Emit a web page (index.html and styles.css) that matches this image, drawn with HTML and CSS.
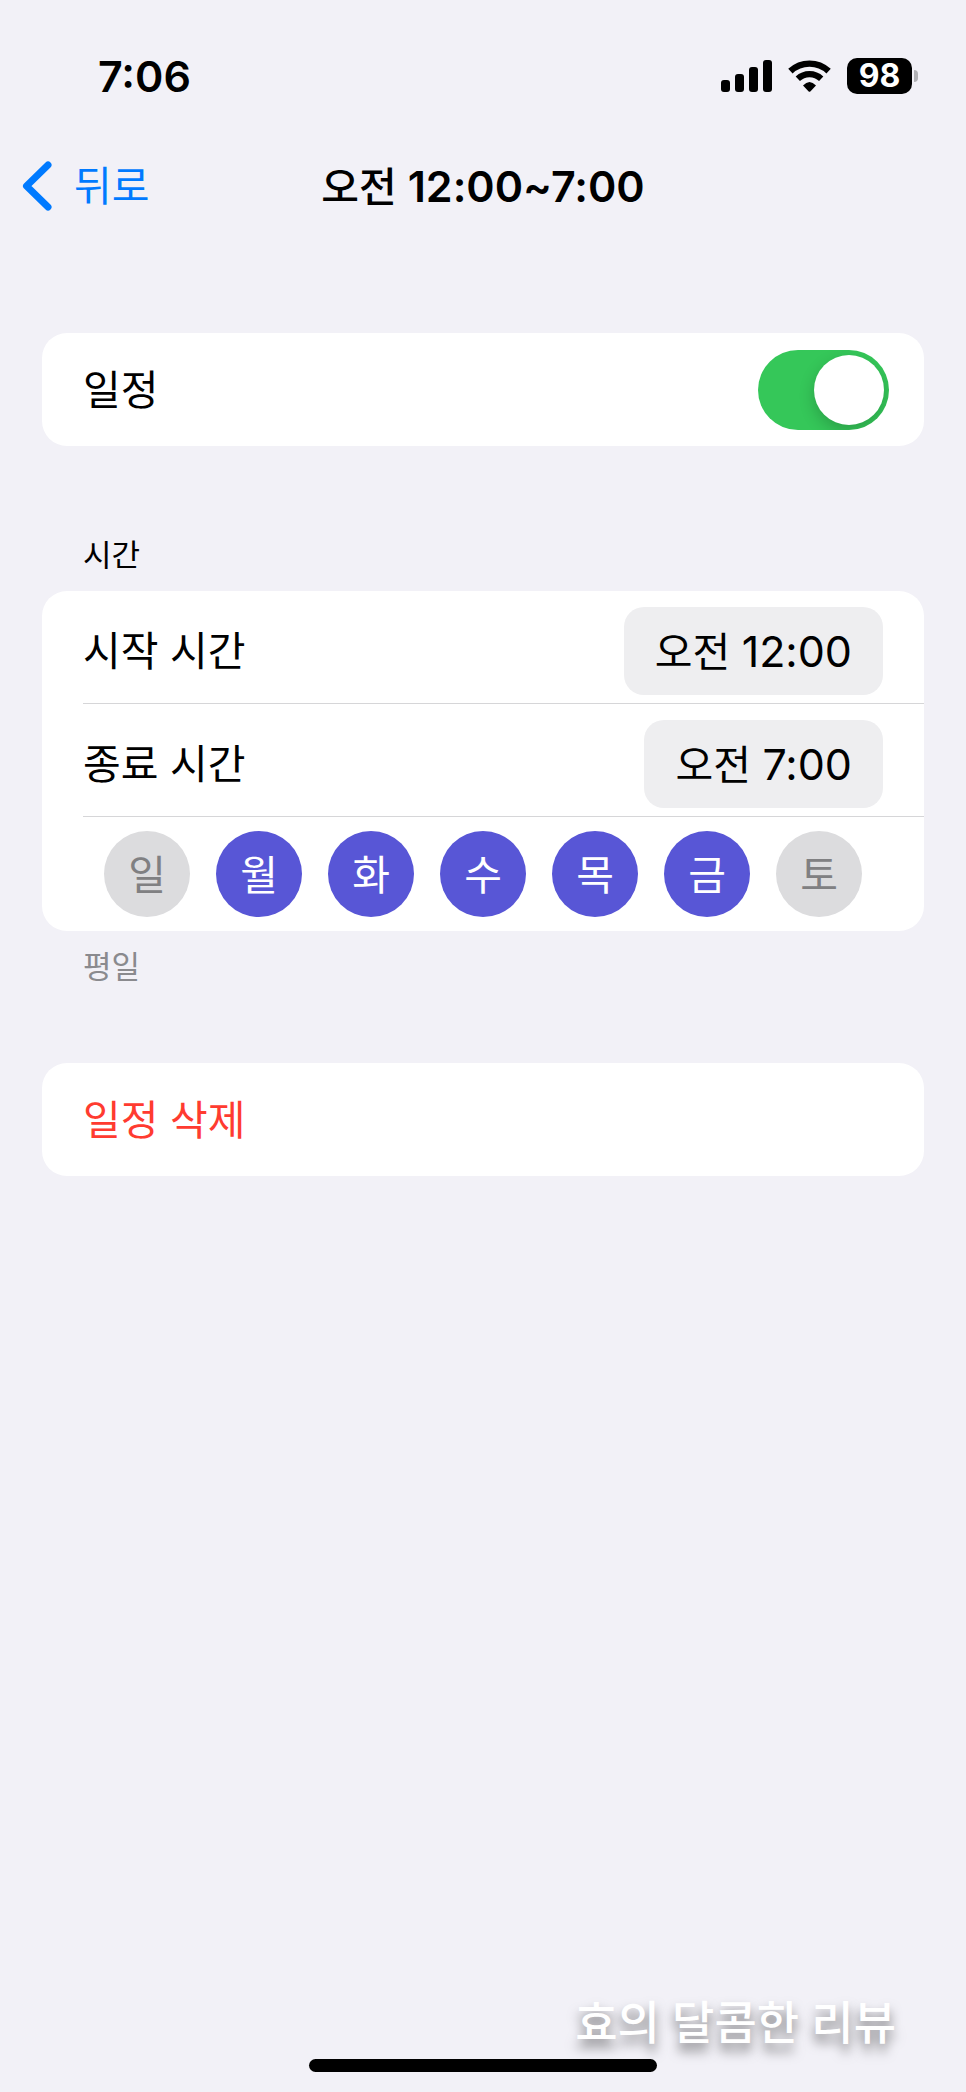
FILE: index.html
```
<!DOCTYPE html>
<html lang="ko">
<head>
  <meta charset="UTF-8">
  <meta name="viewport" content="width=device-width, initial-scale=1">
  <title>오전 12:00~7:00</title>
  <link rel="stylesheet" href="styles.css">
</head>
<body>

  <!-- STATUS BAR -->
  <div class="status-bar">
    <span class="clock">7:06</span>
    <div class="status-icons">
      <svg class="signal" width="51" height="32" viewBox="0 0 51 32">
        <rect x="0" y="20" width="9" height="12" rx="3"/>
        <rect x="14" y="14" width="9" height="18" rx="3"/>
        <rect x="28" y="7" width="9" height="25" rx="3"/>
        <rect x="42" y="0" width="9" height="32" rx="3"/>
      </svg>
      <svg class="wifi" width="43" height="32" viewBox="0 0 43 32">
        <path d="M2.4 11.2A28 28 0 0 1 40.6 11.2" fill="none" stroke="#000" stroke-width="6.4"/>
        <path d="M9.8 18.8A17 17 0 0 1 33.2 18.8" fill="none" stroke="#000" stroke-width="6.2"/>
        <path d="M15 25.6Q21.5 18.6 28 25.6L22.3 31.4Q21.5 32.2 20.7 31.4Z"/>
      </svg>
      <div class="battery">
        <span class="battery-level">98</span>
        <span class="battery-cap"></span>
      </div>
    </div>
  </div>

  <header class="nav">
    <a class="back" href="#">
      <svg width="30" height="50" viewBox="0 0 30 50">
        <path d="M26 4L4.5 25L26 46" fill="none" stroke="currentColor" stroke-width="7" stroke-linecap="round" stroke-linejoin="round"/>
      </svg>
      뒤로
    </a>
    <h1>오전 <span class="num">12:00~7:00</span></h1>
  </header>

  <main>
    <div class="card">
      <div class="row">
        <label for="schedule">일정</label>
        <input class="switch" type="checkbox" id="schedule" checked>
      </div>
    </div>

    <h2>시간</h2>
    <div class="card">
      <div class="row line">
        <span id="start-label">시작 시간</span>
        <button class="time" type="button" aria-labelledby="start-label start-time"><span id="start-time">오전 <span class="num">12:00</span></span></button>
      </div>
      <div class="row line">
        <span id="end-label">종료 시간</span>
        <button class="time" type="button" aria-labelledby="end-label end-time"><span id="end-time">오전 <span class="num">7:00</span></span></button>
      </div>
      <div class="days">
        <label class="day"><input type="checkbox">일</label>
        <label class="day"><input type="checkbox" checked>월</label>
        <label class="day"><input type="checkbox" checked>화</label>
        <label class="day"><input type="checkbox" checked>수</label>
        <label class="day"><input type="checkbox" checked>목</label>
        <label class="day"><input type="checkbox" checked>금</label>
        <label class="day"><input type="checkbox">토</label>
      </div>
    </div>
    <p class="note">평일</p>

    <div class="card">
      <button class="row delete" type="button">일정 삭제</button>
    </div>
  </main>

  <footer>
    <div class="home-bar"></div>
    <span class="signature">효의 달콤한 리뷰</span>
  </footer>

</body>
</html>
```
FILE: styles.css
```
* {
  box-sizing: border-box;
}

body {
  margin: 0;
  min-height: 100vh;
  display: flex;
  flex-direction: column;
  background: #f2f1f7;
  color: #000;
  font-family: Inter, "Noto Sans CJK KR", sans-serif;
  font-size: 41px;
  line-height: 56px;
}

button {
  border: none;
  font: inherit;
  color: inherit;
  cursor: pointer;
}

.num {
  font-size: 43px;
}

/* Status bar */
.status-bar {
  display: flex;
  justify-content: space-between;
  align-items: center;
  height: 152px;
  padding: 0 48px 0 98px;
}

.clock {
  font-size: 43px;
  font-weight: 600;
}

.status-icons {
  display: flex;
  align-items: center;
  gap: 16px;
}

.battery {
  display: flex;
  align-items: center;
  gap: 2px;
}

.battery-level {
  width: 65px;
  height: 36px;
  border-radius: 10px;
  background: #000;
  color: #fff;
  font-size: 32px;
  font-weight: 700;
  line-height: 36px;
  text-align: center;
}

.battery-cap {
  width: 4px;
  height: 12px;
  border-radius: 0 4px 4px 0;
  background: #b0b0b4;
}

/* Navigation */
.nav {
  display: grid;
  grid-template-columns: 1fr auto 1fr;
  align-items: center;
  height: 68px;
  padding: 0 22px;
}

.back {
  display: flex;
  align-items: center;
  gap: 22px;
  color: #007aff;
  text-decoration: none;
}

h1 {
  margin: 0;
  font-size: 41px;
  font-weight: 500;
}

h1 .num {
  font-weight: 600;
}

/* Cards */
main {
  padding: 113px 42px 0;
}

.card {
  overflow: hidden;
  border-radius: 25px;
  background: #fff;
}

.row {
  display: flex;
  justify-content: space-between;
  align-items: center;
  width: 100%;
  height: 113px;
  padding: 0 41px;
}

.row.line {
  width: auto;
  margin-left: 41px;
  padding: 8px 41px 0 0;
  border-bottom: 1px solid #d6d6d8;
}

h2 {
  margin: 93px 41px 20px;
  font-size: 31px;
  font-weight: 400;
  line-height: 32px;
}

.note {
  margin: 20px 41px 80px;
  color: #8a8a8e;
  font-size: 31px;
  line-height: 32px;
}

.delete {
  background: none;
  color: #ff3b30;
}

.switch {
  appearance: none;
  width: 131px;
  height: 80px;
  margin: 0 -6px 0 0;
  padding: 5px;
  border-radius: 40px;
  background: #e9e9ea;
  overflow: hidden;
}

.switch::before {
  content: "";
  display: block;
  width: 70px;
  height: 70px;
  border-radius: 50%;
  background: #fff;
  box-shadow: 0 6px 16px rgba(0,0,0,0.2);
}

.switch:checked {
  background: #35c759;
}

.switch:checked::before {
  margin-left: auto;
}

.time {
  height: 88px;
  padding: 0 31px;
  border-radius: 20px;
  background: #eeeef0;
}

/* Days */
.days {
  display: flex;
  justify-content: space-between;
  padding: 14px 62px;
}

.day {
  width: 86px;
  height: 86px;
  border-radius: 50%;
  background: #dcdcde;
  color: #808082;
  line-height: 88px;
  text-align: center;
  cursor: pointer;
}

.day:has(input:checked) {
  background: #5856d6;
  color: #fff;
}

.day input {
  position: absolute;
  opacity: 0;
}

/* Bottom */
footer {
  position: relative;
  margin-top: auto;
  padding: 40px 0 20px;
}

.home-bar {
  width: 36%;
  height: 13px;
  margin: 0 auto;
  border-radius: 7px;
  background: #000;
}

.signature {
  position: absolute;
  right: 70px;
  bottom: 42px;
  color: #fff;
  font-size: 46px;
  font-weight: 500;
  text-shadow: 0 8px 12px rgba(0,0,0,0.5);
}
```
